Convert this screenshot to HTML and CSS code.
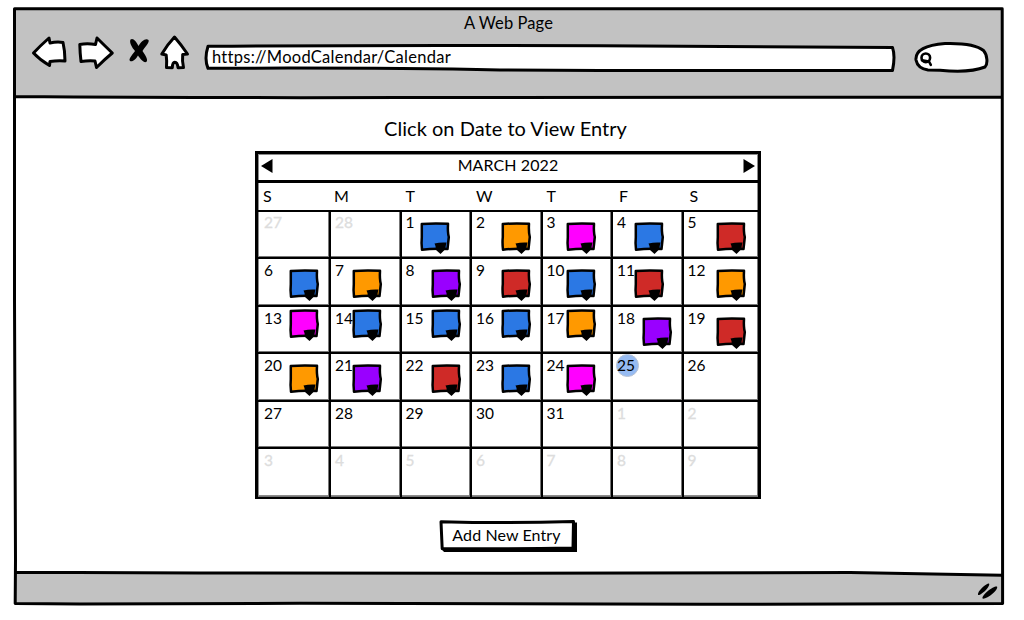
FILE: index.html
```html
<!DOCTYPE html>
<html lang="en">
<head>
<meta charset="utf-8">
<title>Mood Calendar</title>
<link rel="stylesheet" href="styles.css">
</head>
<body>
<div class="window">
  <svg class="frame" viewBox="0 0 1024 620" aria-hidden="true">
    <path class="panel" d="M15 9H1002V97H15zM15 573L200 573 900 573 1002 575V604H15z"/>
    <path class="outline" d="M14.5 8.7H1002.2L1002.5 400 1002.6 603.5 700 604.3 300 603.3 80 604 15.2 603.5 15.5 560 14.5 300zM14.5 96.5Q200 98 400 97.5L1002 97M15.5 572.3L200 573 500 573.2 850 572.5 1002 575.2"/>
  </svg>
  <header class="chrome">
    <div class="chrome-title">A Web Page</div>
    <div class="toolbar">
      <svg class="nav-icons" viewBox="30 34 162 36">
        <path class="shape" d="M33.5 53Q40 46 49 38L50 43Q57 41.500 63 42.500Q65 51 65 61Q57 60.500 50 61.500L49.500 65.500Q40 60 33.500 53z"/>
        <path class="shape" d="M79.800 44.500Q87 43 95.500 44.500L97 38Q104 45 112.300 53Q105 59 96.500 67.500L95 61Q88 60.500 81 61.500Q80 53 79.800 44.500z"/>
        <path class="solid" d="M130.500 39.500C133 37.500 136 41 138.500 46C141 41 146 37.500 148.500 40C150 42.500 144 48 142.500 51C145 54.500 148.500 60 146.500 61.800C144 63.500 140.500 59 138 55.500C136 59 132.500 62.500 130 61C128 59 133 54 135 51C132 47.500 129 42.500 130.500 39.500z"/>
        <path class="shape" d="M174.500 37Q181 44.500 187.500 54L182.700 54.500Q182 61 183.500 67.500L178 67.700Q177.500 62.500 174.800 62.300Q172.500 62.500 172.300 67.700L166.500 67.500Q167 61 166.200 55L161.800 54Q167 45 174.500 37z"/>
      </svg>
      <div class="address">
        <svg class="address-box" viewBox="203 42 694 31"><path class="shape" d="M208 46.200Q400 45 600 45.800L892.500 47.500Q895.500 56 892.500 70.400L600 70.400 500 70Q380 67.500 208 68.300Q204 59 208 46.200z"/></svg>
        <span class="url">https://MoodCalendar/Calendar</span>
      </div>
      <svg class="search" viewBox="913 40 77 34">
        <path class="shape" d="M916 60C915 50 926 45 945 43.500C963 43 977 45 983.500 50.500C987.500 55 988 64 985 67C975 71 958 72 940 70.200L928 70C921 69 917 65 916 60z"/>
        <circle class="lens" cx="925.800" cy="57.800" r="4.300"/><path class="lens" d="M922 60.300L929 61.500L930.800 64.800"/>
      </svg>
    </div>
  </header>
  <main class="page">
    <h1 class="heading">Click on Date to View Entry</h1>
    <section class="calendar">
      <div class="month">
        <svg class="arrow" viewBox="0 0 12 14"><path d="M0 7L11.500 0V14z"/></svg>
        <span>MARCH 2022</span>
        <svg class="arrow" viewBox="0 0 12 14"><path d="M12 7L.5 0V14z"/></svg>
      </div>
      <div class="weekdays"><span>S</span><span>M</span><span>T</span><span>W</span><span>T</span><span>F</span><span>S</span></div>
      <div class="days" id="days"></div>
    </section>
    <button class="add" type="button">
      <svg class="add-box" viewBox="438 518 141 35"><path class="solid" d="M444 522.500H577V552H444L442 549.500z"/><path class="shape" d="M441 521.700Q508 523.500 573.500 521.500L573 548Q508 549 442.200 548.800z"/></svg>
      <span class="add-label">Add New Entry</span>
    </button>
  </main>
  <footer class="statusbar">
    <svg class="grip" viewBox="976 581 24 20"><path class="solid" d="M978 595C977 591 987 583 989 583.500C991 586 981 596 978 595zM982.500 598.500C982 594 994 585.500 997 586.500C999 590 986 600 982.500 598.500z"/></svg>
  </footer>
</div>
<script src="calendar.js"></script>
</body>
</html>
```
FILE: styles.css
```css
* { box-sizing: border-box; }
body { margin: 0; background: #fff; color: #000; font-family: Lato, "Noto Sans", sans-serif; font-size: 16px; }
.window { position: relative; width: 1024px; height: 620px; display: flex; flex-direction: column; overflow: hidden; }
.frame { position: absolute; inset: 0; width: 1024px; height: 620px; }
.panel { fill: #c2c2c2; }
.outline { fill: none; stroke: #000; stroke-width: 3; stroke-linejoin: round; }
.shape { fill: #fff; stroke: #000; stroke-width: 3; stroke-linejoin: round; }
.solid { fill: #000; }
.lens { fill: none; stroke: #000; stroke-width: 2.6; stroke-linecap: round; stroke-linejoin: round; }

.chrome { position: relative; height: 98px; padding-top: 12px; }
.chrome-title { height: 22px; line-height: 22px; padding-right: 7px; text-align: center; font-size: 16.5px; letter-spacing: .1px; }
.toolbar { display: flex; padding-left: 30px; }
.nav-icons { width: 162px; height: 36px; flex: none; }
.address { display: grid; width: 694px; margin: 8px 0 0 11px; flex: none; }
.address-box { grid-area: 1 / 1; width: 694px; height: 31px; }
.url { grid-area: 1 / 1; z-index: 1; justify-self: start; margin-left: 9px; line-height: 30px; font-size: 16.5px; letter-spacing: .27px; }
.search { width: 77px; height: 34px; margin: 6px 0 0 16px; flex: none; }

.page { position: relative; height: 475px; display: flex; flex-direction: column; align-items: center; padding-right: 8px; }
.heading { margin: 0; height: 53px; padding: 16px 5px 0 0; font-size: 20px; line-height: 28px; font-weight: 400; letter-spacing: .03px; }
.calendar { width: 506px; height: 348px; border: 3px solid #000; background: #fff; box-shadow: inset 0 0 0 1px #8c8c8c; }
.month { height: 29px; padding: 0 3px; display: flex; align-items: center; justify-content: space-between; border-bottom: 3px solid #000; }
.month span { line-height: 26px; margin-top: -4px; letter-spacing: .1px; }
.arrow { width: 12px; height: 14px; margin-top: -2px; }
.weekdays, .days { display: grid; grid-template-columns: 73px repeat(5, 70.5px) 1fr; }
.weekdays { height: 29px; line-height: 25px; border-bottom: 2px solid #000; }
.weekdays span { padding-left: 4px; }
.weekdays span:first-child { padding-left: 5px; }
.weekdays span:nth-child(2) { padding-left: 3px; }
.weekdays span:nth-child(n+6) { padding-left: 6px; }
.days { grid-template-rows: repeat(5, 47.4px) 48px; }
.day { display: grid; align-content: start; justify-items: start; border-right: 2px solid #000; border-bottom: 2px solid #000; box-shadow: inset -1px -1px #777; }
.day:nth-child(7n) { border-right: 0; }
.day:nth-child(n+36) { border-bottom: 0; }
.number { grid-area: 1 / 1; padding-left: 4px; line-height: 21px; font-size: 15.500px; }
.day:nth-child(n+8) .number { line-height: 22px; }
.day:nth-child(7n+1) .number { padding-left: 6px; }
.day:nth-child(n+8):nth-child(-n+35):not(.muted) .number { letter-spacing: -.1px; }
.muted .number { color: #ddd; -webkit-text-stroke: .3px #ddd; }
.today { grid-area: 1 / 1; width: 23px; height: 23px; margin: 0 0 0 3px; border-radius: 50%; background: #96bbf2; border: 1px solid #b9c3d4; }
.today + .number { z-index: 1; }
.note { grid-area: 1 / 1; width: 31px; height: 33px; margin: 10px 0 -10px; overflow: visible; }
.note.raised { margin-top: 2.500px; }
.note path:first-child { stroke: #000; stroke-width: 2.5; stroke-linejoin: round; }
.blue { fill: #2b78e4; }
.orange { fill: #ff9900; }
.pink { fill: #ff00ff; }
.red { fill: #cf2a27; }
.purple { fill: #9900ff; }

.add { display: grid; width: 141px; height: 35px; margin: 19px 1px 0 2px; padding: 0; border: 0; background: none; font: inherit; color: inherit; }
.add-box { grid-area: 1 / 1; width: 141px; height: 35px; }
.add-label { grid-area: 1 / 1; z-index: 1; line-height: 34px; padding-right: 4px; letter-spacing: .1px; }

.statusbar { position: relative; height: 47px; display: flex; justify-content: flex-end; padding: 8px 24px 0 0; }
.grip { width: 24px; height: 20px; }
```
FILE: calendar.js
```js
const moods = {
  1: ["blue", 18.5], 2: ["orange", 29], 3: ["pink", 23.5], 4: ["blue", 20.7], 5: ["red", 32.8],
  6: ["blue", 31], 7: ["orange", 21.3], 8: ["purple", 29.5], 9: ["red", 29], 10: ["blue", 23.5], 11: ["red", 20.7], 12: ["orange", 32.8],
  13: ["pink", 31, 1], 14: ["blue", 21.3, 1], 15: ["blue", 29.5, 1], 16: ["blue", 29, 1], 17: ["orange", 23.5, 1], 18: ["purple", 29.3], 19: ["red", 32.8],
  20: ["orange", 31], 21: ["purple", 21.3], 22: ["red", 29.5], 23: ["blue", 29], 24: ["pink", 23.5]
};
const note = ([color, left, raised]) =>
  `<svg class="note${raised ? " raised" : ""}" style="margin-left:${left}px" viewBox="0 0 31 33">` +
  `<path class="${color}" d="M1.800 2Q14 1 28 1.800Q27.500 10 28.800 15L27.500 27Q14 26 2 27.800Q1.200 21 1.800 15z"/>` +
  `<path d="M14.500 21.500Q20 20 26.500 20.500Q25.500 24 25.500 27L20.500 32L16 28Q16 24 14.500 21.500z"/></svg>`;
const grid = document.getElementById("days");
for (let i = 0; i < 42; i++) {
  const day = i < 2 ? 27 + i : i > 32 ? i - 32 : i - 1;
  const current = i > 1 && i < 33;
  const cell = document.createElement("div");
  cell.className = current ? "day" : "day muted";
  cell.innerHTML = (current && day === 25 ? '<span class="today"></span>' : "") +
    `<span class="number">${day}</span>` + (current && moods[day] ? note(moods[day]) : "");
  grid.append(cell);
}
```
